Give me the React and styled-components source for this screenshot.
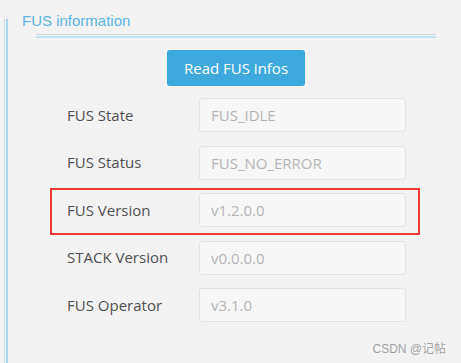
import React from "react";
import styled, { createGlobalStyle } from "styled-components";

const Global = createGlobalStyle`
  html, body { margin: 0; padding: 0; background: #f3f3f3; }
  body { font-family: "Open Sans", "Liberation Sans", sans-serif; }
`;

const Page = styled.div`
  position: relative;
  display: flex;
  width: 461px;
  height: 363px;
  background: #f3f3f3;
  overflow: hidden;
`;

const Rail = styled.div`
  margin-left: 4px;
  margin-top: 19px;
  border-left: 1px solid #c7dde7;
  padding-left: 1px;
  display: flex;
`;

const RailLine = styled.div`
  width: 2px;
  background: #a9d7ea;
`;

const Content = styled.div`
  flex: 1;
  display: flex;
  flex-direction: column;
`;

const Title = styled.div`
  margin: 12px 0 0 14px;
  font-family: "Liberation Sans", Arial, sans-serif;
  font-size: 15px;
  line-height: 18px;
  color: #5cb3e4;
`;

const Separator = styled.div`
  margin: 4px 0 0 28px;
  width: 400px;
  height: 1px;
  border-top: 1px solid #d2d6d8;
  border-bottom: 2px solid #bfe2f1;
`;

const ButtonRow = styled.div`
  margin: 12px 0 0 28px;
  width: 400px;
  display: flex;
  justify-content: center;
`;

const ReadButton = styled.button`
  width: 138px;
  height: 36px;
  border: none;
  border-radius: 3px;
  background: #3ea9dc;
  color: #ffffff;
  font-family: "Open Sans", sans-serif;
  font-size: 15px;
  padding: 0;
`;

const Form = styled.div`
  margin: 12px 0 0 42px;
  width: 370px;
  display: flex;
  flex-direction: column;
  gap: 13.5px;
`;

const Row = styled.div`
  position: relative;
  display: flex;
  align-items: center;
  padding-left: 17px;
  &::after {
    content: "";
    display: ${(p) => (p.$highlight ? "block" : "none")};
    position: absolute;
    left: 0;
    right: 0;
    top: -5px;
    bottom: -8px;
    border: 2px solid #f03a3a;
  }
`;

const Label = styled.div`
  width: 132px;
  font-size: 15px;
  color: #4f4f4f;
  margin-top: -1px;
`;

const Field = styled.div`
  box-sizing: border-box;
  width: 207px;
  height: 34px;
  padding-left: 11px;
  display: flex;
  align-items: center;
  background: #f7f7f7;
  border: 1px solid #e3e3e3;
  border-radius: 3px;
  font-size: 15px;
  color: #b5b5b5;
`;

const Watermark = styled.div`
  position: absolute;
  right: 15px;
  bottom: 7px;
  font-family: "Liberation Sans", "Noto Sans CJK SC", sans-serif;
  font-size: 12px;
  color: #a3a3a3;
`;

const rows = [
  ["FUS State", "FUS_IDLE"],
  ["FUS Status", "FUS_NO_ERROR"],
  ["FUS Version", "v1.2.0.0", true],
  ["STACK Version", "v0.0.0.0"],
  ["FUS Operator", "v3.1.0"],
];

export default function App() {
  return (
    <>
      <Global />
      <Page>
        <Rail>
          <RailLine />
        </Rail>
        <Content>
          <Title>FUS information</Title>
          <Separator />
          <ButtonRow>
            <ReadButton>Read FUS infos</ReadButton>
          </ButtonRow>
          <Form>
            {rows.map(([label, value, hl]) => (
              <Row key={label} $highlight={hl}>
                <Label>{label}</Label>
                <Field>{value}</Field>
              </Row>
            ))}
          </Form>
        </Content>
        <Watermark>CSDN @记帖</Watermark>
      </Page>
    </>
  );
}
